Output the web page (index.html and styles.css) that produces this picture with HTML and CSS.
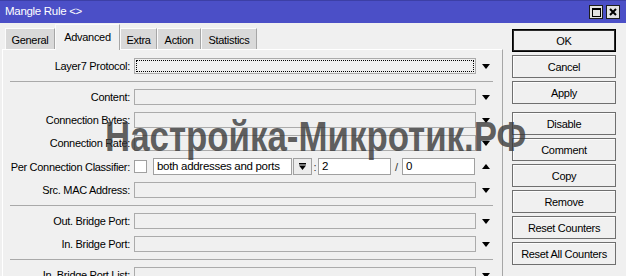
FILE: index.html
```html
<!DOCTYPE html>
<html>
<head>
<meta charset="utf-8">
<link rel="stylesheet" href="styles.css">
</head>
<body>
<div class="window">
  <div class="titlebar">
    <span class="title">Mangle Rule &lt;&gt;</span>
    <div class="tb-btns">
      <span class="tb-btn"><svg width="9" height="9" viewBox="0 0 9 9"><rect x="0.5" y="0.5" width="8" height="8" fill="none" stroke="#000" stroke-width="1"/><rect x="0" y="0" width="9" height="2" fill="#000"/></svg></span>
      <span class="tb-btn"><svg width="8" height="8" viewBox="0 0 8 8"><path d="M1 1 L7 7 M7 1 L1 7" stroke="#000" stroke-width="2"/></svg></span>
    </div>
  </div>
  <div class="main">
    <div class="left">
      <div class="tabs">
        <div class="tab t-general">General</div>
        <div class="tab active t-advanced">Advanced</div>
        <div class="tab t-extra">Extra</div>
        <div class="tab t-action">Action</div>
        <div class="tab t-stats">Statistics</div>
      </div>
      <div class="panel">
        <div class="form">
          <div class="row">
            <span class="label">Layer7 Protocol:</span>
            <span class="field focus"></span>
            <svg class="arrow" width="8" height="5" viewBox="0 0 8 5"><polygon points="0,0 8,0 4,5" fill="#000"/></svg>
          </div>
          <div class="sep"></div>
          <div class="row">
            <span class="label">Content:</span>
            <span class="field"></span>
            <svg class="arrow" width="8" height="5" viewBox="0 0 8 5"><polygon points="0,0 8,0 4,5" fill="#000"/></svg>
          </div>
          <div class="row">
            <span class="label">Connection Bytes:</span>
            <span class="field"></span>
            <svg class="arrow" width="8" height="5" viewBox="0 0 8 5"><polygon points="0,0 8,0 4,5" fill="#000"/></svg>
          </div>
          <div class="row">
            <span class="label">Connection Rate:</span>
            <span class="field"></span>
            <svg class="arrow" width="8" height="5" viewBox="0 0 8 5"><polygon points="0,0 8,0 4,5" fill="#000"/></svg>
          </div>
          <div class="row row-pcc">
            <span class="label">Per Connection Classifier:</span>
            <div class="pcc">
              <span class="check"></span>
              <span class="select">both addresses and ports</span>
              <span class="drop"><svg width="7" height="7" viewBox="0 0 7 7"><rect x="0" y="0" width="7" height="1.5" fill="#000"/><polygon points="0,2.5 7,2.5 3.5,7" fill="#000"/></svg></span>
              <span class="colon">:</span>
              <span class="num">2</span>
              <span class="slash">/</span>
              <span class="num">0</span>
            </div>
            <svg class="arrow" width="8" height="5" viewBox="0 0 8 5"><polygon points="0,5 8,5 4,0" fill="#000"/></svg>
          </div>
          <div class="row">
            <span class="label">Src. MAC Address:</span>
            <span class="field"></span>
            <svg class="arrow" width="8" height="5" viewBox="0 0 8 5"><polygon points="0,0 8,0 4,5" fill="#000"/></svg>
          </div>
          <div class="sep"></div>
          <div class="row">
            <span class="label">Out. Bridge Port:</span>
            <span class="field"></span>
            <svg class="arrow" width="8" height="5" viewBox="0 0 8 5"><polygon points="0,0 8,0 4,5" fill="#000"/></svg>
          </div>
          <div class="row">
            <span class="label">In. Bridge Port:</span>
            <span class="field"></span>
            <svg class="arrow" width="8" height="5" viewBox="0 0 8 5"><polygon points="0,0 8,0 4,5" fill="#000"/></svg>
          </div>
          <div class="sep"></div>
          <div class="row">
            <span class="label">In. Bridge Port List:</span>
            <span class="field"></span>
            <svg class="arrow" width="8" height="5" viewBox="0 0 8 5"><polygon points="0,0 8,0 4,5" fill="#000"/></svg>
          </div>
        </div>
      </div>
    </div>
    <div class="actions">
      <div class="btn default">OK</div>
      <div class="btn">Cancel</div>
      <div class="btn spaced">Apply</div>
      <div class="btn">Disable</div>
      <div class="btn">Comment</div>
      <div class="btn">Copy</div>
      <div class="btn">Remove</div>
      <div class="btn">Reset Counters</div>
      <div class="btn">Reset All Counters</div>
    </div>
  </div>
  <div class="watermark">Настройка-Микротик.РФ</div>
</div>
</body>
</html>
```
FILE: styles.css
```css
body {
  margin: 0;
  background: #f0f0f0;
  font-family: "Liberation Sans", Arial, sans-serif;
  font-size: 11px;
  letter-spacing: -0.3px;
  color: #000;
}
.window {
  position: relative;
  width: 626px;
  height: 276px;
  overflow: hidden;
}
.titlebar {
  height: 23px;
  box-sizing: border-box;
  background: #4b4fc7;
  border-top: 1px solid #3c3fa6;
  display: flex;
  justify-content: space-between;
  align-items: flex-start;
  padding-left: 5px;
  color: #fff;
}
.title {
  font-size: 11.5px;
  line-height: 20px;
}
.tb-btns {
  display: flex;
  gap: 3px;
  margin-right: 6px;
  margin-top: 4px;
}
.tb-btn {
  width: 14px;
  height: 14px;
  box-sizing: border-box;
  border: 1px solid #1e1e1e;
  background: #e2e2e2;
  display: flex;
  align-items: center;
  justify-content: center;
}
.main {
  display: flex;
}
.left {
  width: 501px;
  padding-left: 2px;
}
.tabs {
  height: 26px;
  display: flex;
  align-items: flex-end;
  padding-left: 3px;
}
.tab {
  height: 21px;
  box-sizing: border-box;
  background: #d9d9d9;
  border-top: 1px solid #fbfbfb;
  border-left: 1px solid #fbfbfb;
  border-right: 1px solid #a6a6a6;
  display: flex;
  align-items: center;
  justify-content: center;
  padding-top: 2px;
}
.tab.active {
  height: 26px;
  background: #f0f0f0;
  margin-bottom: -1px;
  padding-top: 0;
  padding-bottom: 1px;
  position: relative;
  z-index: 1;
}
.t-general { width: 50px; }
.t-advanced { width: 65px; }
.t-extra { width: 37px; }
.t-action { width: 44px; }
.t-stats { width: 56px; }
.panel {
  border-top: 1px solid #fff;
  border-left: 1px solid #fff;
  border-right: 1px solid #a6a6a6;
  height: 240px;
  padding-top: 8px;
}
.form {
  display: flex;
  flex-direction: column;
  gap: 7px;
}
.row {
  display: grid;
  grid-template-columns: 131px 342px auto;
  align-items: center;
  height: 16px;
}
.row-pcc {
  height: 17px;
}
.label {
  text-align: right;
  padding-right: 4px;
  line-height: 16px;
  white-space: nowrap;
}
.field {
  height: 16px;
  box-sizing: border-box;
  border: 1px solid #ababab;
  background: #f0f0f0;
}
.field.focus {
  outline: 1px dotted #000;
  outline-offset: -3px;
}
.arrow {
  margin-left: 6px;
  display: block;
}
.sep {
  height: 1px;
  background: #a9a9a9;
  margin-left: 7px;
  width: 483px;
}
.pcc {
  display: flex;
  align-items: center;
  height: 17px;
}
.check {
  width: 13px;
  height: 13px;
  box-sizing: border-box;
  border: 1px solid #a0a0a0;
  background: #fff;
  margin-right: 6px;
}
.select {
  width: 139px;
  height: 17px;
  box-sizing: border-box;
  border: 1px solid #a0a0a0;
  background: #fff;
  padding-left: 3px;
  line-height: 15px;
  font-size: 11.5px;
  white-space: nowrap;
  overflow: hidden;
}
.drop {
  width: 19px;
  height: 17px;
  box-sizing: border-box;
  border: 1px solid #a0a0a0;
  background: #ececec;
  margin-left: 1px;
  display: flex;
  align-items: center;
  justify-content: center;
}
.colon {
  width: 6px;
  text-align: center;
  color: #333;
}
.slash {
  width: 11px;
  text-align: center;
  color: #333;
}
.num {
  width: 73px;
  height: 17px;
  box-sizing: border-box;
  border: 1px solid #a0a0a0;
  background: #fff;
  padding-left: 3px;
  line-height: 15px;
  font-size: 11.5px;
}
.actions {
  margin-left: 9px;
  width: 104px;
  padding-top: 6px;
  display: flex;
  flex-direction: column;
  gap: 3px;
}
.btn {
  height: 23px;
  box-sizing: border-box;
  border: 1px solid #6f6f6f;
  background: #f0f0f0;
  box-shadow: inset 1px 1px 0 #fcfcfc;
  display: flex;
  align-items: center;
  justify-content: center;
  white-space: nowrap;
}
.btn.default {
  border: 1px solid #000;
  box-shadow: inset 0 0 0 1px #2a2a2a;
}
.btn.spaced {
  margin-bottom: 5px;
}
.watermark {
  position: absolute;
  left: 105px;
  top: 116px;
  font-size: 42px;
  line-height: 42px;
  font-weight: bold;
  letter-spacing: 0;
  color: rgba(55, 55, 55, 0.8);
  white-space: nowrap;
  pointer-events: none;
  transform: scaleX(0.83);
  transform-origin: left top;
}
```
